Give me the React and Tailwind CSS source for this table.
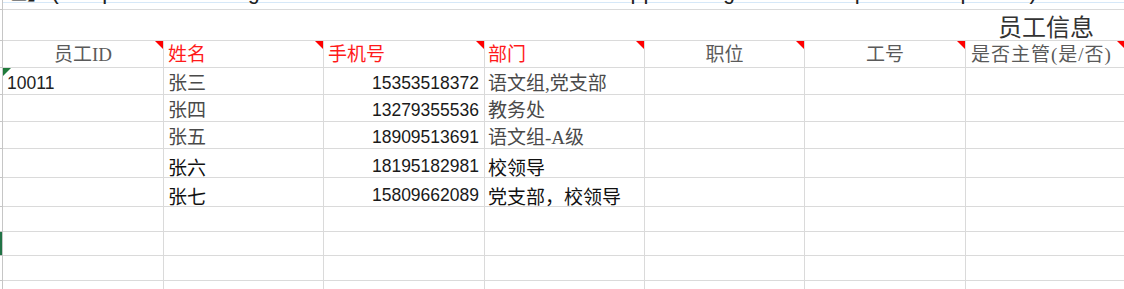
import React from "react";

const COLS = "grid grid-cols-[3px_161px_160px_161px_160px_160px_161px_160px]";
const LINE = "border-[#dadada]";
const SANS = "font-['Liberation_Sans','Noto_Sans_CJK_SC',sans-serif]";
const SERIF = "font-['Liberation_Serif','Noto_Sans_CJK_SC',serif]";

function Tri() {
  return (
    <span className="absolute top-0 right-0 w-0 h-0 border-l-[8px] border-l-transparent border-t-[8px] border-t-[#ff0000]" />
  );
}

function Strip({ green = false }) {
  return (
    <div
      className={`border-r border-b border-[#c6c6c6] ${green ? "bg-[#217346]" : "bg-white"}`}
    />
  );
}

const headers = [
  { t: "员工ID", cls: "justify-center text-[#5a5a5a]" },
  { t: "姓名", cls: "justify-start pl-[4px] text-[#ff1a1a]" },
  { t: "手机号", cls: "justify-start pl-[4px] text-[#ff1a1a]" },
  { t: "部门", cls: "justify-start pl-[3px] text-[#ff1a1a]" },
  { t: "职位", cls: "justify-center text-[#5a5a5a]" },
  { t: "工号", cls: "justify-center text-[#5a5a5a]" },
  { t: "是否主管(是/否)", cls: "justify-start pl-[5px] tracking-[1px] text-[#5a5a5a]" },
];

const rows = [
  { id: "10011", name: "张三", phone: "15353518372", dept: "语文组,党支部", dark: false, h: "h-[27px]" },
  { id: "", name: "张四", phone: "13279355536", dept: "教务处", dark: false, h: "h-[27px]" },
  { id: "", name: "张五", phone: "18909513691", dept: "语文组-A级", dark: false, h: "h-[27px]" },
  { id: "", name: "张六", phone: "18195182981", dept: "校领导", dark: true, h: "h-[29px]" },
  { id: "", name: "张七", phone: "15809662089", dept: "党支部，校领导", dark: true, h: "h-[29px]" },
];

const empties = [
  { h: "h-[25px]", green: false },
  { h: "h-[24px]", green: true },
  { h: "h-[25px]", green: false },
  { h: "h-[25px]", green: false },
];

export default function App() {
  return (
    <div className="w-[1124px] h-[289px] overflow-hidden bg-white">
      {/* top clipped row */}
      <div className={`${COLS} h-[10px]`}>
        <Strip />
        <div className={`col-span-7 border-b ${LINE} relative overflow-hidden`}>
          <div className="absolute left-0 right-0 top-[2px] h-px bg-[#d6e8f8]" />
          <div className="mt-[-17px] ml-[2px] whitespace-nowrap text-[22px] leading-[22px] text-[#222] font-['Liberation_Mono','Noto_Sans_CJK_SC',monospace] relative">
            址】(http://www.dingtalk.com/user/addUser?id=wxapp#/dingtalk/userpid=#0sspatch)
          </div>
        </div>
      </div>

      {/* title row */}
      <div className={`${COLS} h-[31px]`}>
        <Strip />
        <div className={`col-span-6 border-b ${LINE}`} />
        <div className={`border-b ${LINE} flex items-end justify-center pb-[2px]`}>
          <span className="text-[24px] leading-[24px] text-[#333] font-['Noto_Sans_CJK_SC',sans-serif]">
            员工信息
          </span>
        </div>
      </div>

      {/* header row */}
      <div className={`${COLS} h-[27px]`}>
        <Strip />
        {headers.map((h, i) => (
          <div
            key={i}
            className={`relative flex items-center pt-[1px] border-r border-b ${LINE} ${h.cls} ${SERIF} text-[19px] leading-[19px] whitespace-nowrap`}
          >
            <span>{h.t}</span>
            <Tri />
          </div>
        ))}
      </div>

      {/* data rows */}
      {rows.map((r, i) => {
        const txt = r.dark
          ? "text-[#111] font-['Noto_Sans_CJK_SC',sans-serif]"
          : `text-[#4a4a4a] ${SERIF}`;
        return (
          <div key={i} className={`${COLS} ${r.h}`}>
            <Strip />
            <div className={`relative flex items-end pb-[1px] pl-[4px] border-r border-b ${LINE} ${SANS} text-[17.5px] leading-[19px] text-[#222]`}>
              {r.id && (
                <span className="absolute top-0 left-0 w-0 h-0 border-r-[8px] border-r-transparent border-t-[8px] border-t-[#1f7a3a]" />
              )}
              <span>{r.id}</span>
            </div>
            <div className={`flex items-end pb-[1px] pl-[4px] border-r border-b ${LINE} text-[19px] leading-[19px] ${txt}`}>
              <span>{r.name}</span>
            </div>
            <div className={`flex items-end justify-end pb-[1px] pr-[5px] border-r border-b ${LINE} ${SANS} text-[17.5px] leading-[19px] text-[#1a1a1a]`}>
              <span>{r.phone}</span>
            </div>
            <div className={`flex items-end pb-[1px] pl-[3px] border-r border-b ${LINE} text-[19px] leading-[19px] whitespace-nowrap ${txt}`}>
              <span>{r.dept}</span>
            </div>
            <div className={`border-r border-b ${LINE}`} />
            <div className={`border-r border-b ${LINE}`} />
            <div className={`border-r border-b ${LINE}`} />
          </div>
        );
      })}

      {/* empty rows */}
      {empties.map((e, i) => (
        <div key={i} className={`${COLS} ${e.h}`}>
          <Strip green={e.green} />
          <div className={`border-r border-b ${LINE}`} />
          <div className={`border-r border-b ${LINE}`} />
          <div className={`border-r border-b ${LINE}`} />
          <div className={`border-r border-b ${LINE}`} />
          <div className={`border-r border-b ${LINE}`} />
          <div className={`border-r border-b ${LINE}`} />
          <div className={`border-r border-b ${LINE}`} />
        </div>
      ))}
    </div>
  );
}
